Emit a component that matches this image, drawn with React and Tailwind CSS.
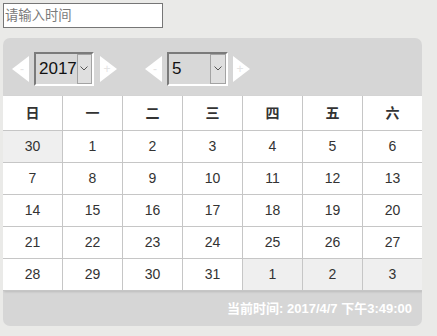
const font = { fontFamily: '"Liberation Sans", "Noto Sans CJK SC", Arial, sans-serif' };

const weekDays = ["日", "一", "二", "三", "四", "五", "六"];

// 5 rows of days, prev/next month days greyed out
const days = [
    [30, 1, 2, 3, 4, 5, 6],
    [7, 8, 9, 10, 11, 12, 13],
    [14, 15, 16, 17, 18, 19, 20],
    [21, 22, 23, 24, 25, 26, 27],
    [28, 29, 30, 31, 1, 2, 3],
];

const isOther = (row, col) => (row === 0 && col === 0) || (row === 4 && col >= 4);

const Arrow = ({ dir }) => (
    <svg width="17" height="26" viewBox="0 0 17 26" className="shrink-0">
        {dir === "left" ? (
            <polygon points="17,0 17,26 0,13" fill="#ffffff" />
        ) : (
            <polygon points="0,0 0,26 17,13" fill="#ffffff" />
        )}
        <text
            x={dir === "left" ? 10 : 7}
            y="17"
            fontSize="12"
            fill="#e4e4e4"
            textAnchor="middle"
            fontFamily="Liberation Sans, sans-serif"
        >
            {dir === "left" ? "-" : "+"}
        </text>
    </svg>
);

const Select = ({ value, width }) => (
    <div
        className={`${width} h-[34px] flex border-2 border-t-[#7b7b7b] border-l-[#7b7b7b] border-b-white border-r-white bg-[#d8d8d8]`}
    >
        <div className="flex-1 flex items-center pl-[3px] text-[17px] text-[#111] leading-none">{value}</div>
        <div className="w-[16px] flex items-center justify-center bg-[#dfdfdf] border border-[#a3a3a3]">
            <svg width="8" height="5" viewBox="0 0 8 5">
                <polyline points="0.5,0.5 4,4 7.5,0.5" fill="none" stroke="#555" strokeWidth="1" />
            </svg>
        </div>
    </div>
);

const App = () => {
    return (
        <div className="w-[437px] h-[336px] bg-[#eaeae8] pt-[3px] pl-[2px]" style={font}>
            <input
                type="text"
                placeholder="请输入时间"
                className="block w-[160px] h-[25px] ml-[1px] bg-white border border-[#767676] px-[1px] text-[13.33px] placeholder:text-[#7a7a7a] outline-none"
                style={font}
            />
            <div className="mt-[10px] ml-[1px] w-[419px] h-[288px] bg-[#d6d6d6] rounded-[7px] flex flex-col overflow-hidden">
                <div className="h-[58px] flex items-center pl-[9px] pt-[3px]">
                    <Arrow dir="left" />
                    <div className="ml-[5px]">
                        <Select value="2017" width="w-[60px]" />
                    </div>
                    <div className="ml-[6px]">
                        <Arrow dir="right" />
                    </div>
                    <div className="ml-[28px]">
                        <Arrow dir="left" />
                    </div>
                    <div className="ml-[5px]">
                        <Select value="5" width="w-[61px]" />
                    </div>
                    <div className="ml-[5px]">
                        <Arrow dir="right" />
                    </div>
                </div>
                <div className="grid grid-cols-[repeat(7,59px)] grid-rows-[34px_repeat(5,31px)] gap-px bg-[#c6c6c6] border-b border-[#c6c6c6] shadow-[1px_1px_2px_rgba(0,0,0,0.12)]">
                    {weekDays.map((d) => (
                        <div key={d} className="bg-white flex items-center justify-center text-[14px] font-bold text-[#333]">
                            {d}
                        </div>
                    ))}
                    {days.map((row, r) =>
                        row.map((n, c) => (
                            <div
                                key={`${r}-${c}`}
                                className={`flex items-center justify-center text-[14px] text-[#333] ${
                                    isOther(r, c) ? "bg-[#efefef]" : "bg-white"
                                }`}
                            >
                                {n}
                            </div>
                        ))
                    )}
                </div>
                <div className="flex-1 flex items-center justify-end pr-[10px] text-[13px] font-bold text-white">
                    当前时间: 2017/4/7 下午3:49:00
                </div>
            </div>
        </div>
    );
};

export default App;
